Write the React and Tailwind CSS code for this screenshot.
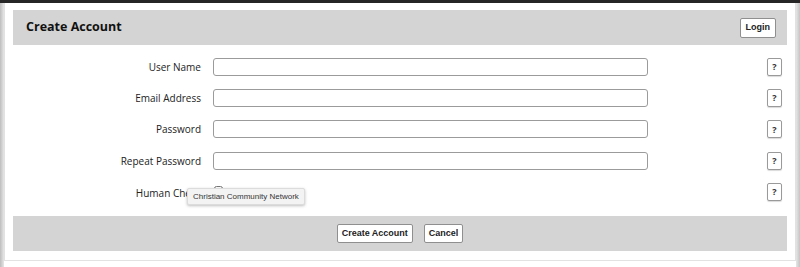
export default function App() {
  const rows = [
    { label: "User Name", type: "text" },
    { label: "Email Address", type: "text" },
    { label: "Password", type: "password" },
    { label: "Repeat Password", type: "password" },
  ];

  const helpBtn = (
    <button className="w-[15px] h-[18px] border border-[#9a9a9a] rounded-[2px] bg-white text-[9px] font-bold text-[#333] leading-none flex items-center justify-center shadow-[0_1px_1px_rgba(0,0,0,0.15)]">
      ?
    </button>
  );

  return (
    <div className="w-[800px] h-[267px] bg-white flex flex-col overflow-hidden" style={{ fontFamily: '"Open Sans", "Liberation Sans", sans-serif' }}>
      <div className="h-[3px] bg-[#262626] shrink-0"></div>
      <div className="flex flex-1">
        <div className="w-[4px] bg-gradient-to-r from-[#bdbdbd] to-[#e6e6e6]"></div>
        <div className="flex-1 flex flex-col">
          <div className="border border-[#e2e2e2] border-t-0 pt-[7px] px-[8px] pb-[9px]">
            <div className="h-[35px] bg-[#d4d4d4] flex items-center justify-between pl-[13px] pr-[11px]">
              <h1 className="text-[12.5px] font-bold text-[#111]">Create Account</h1>
              <button className="h-[20px] px-[5px] bg-white border border-[#8f8f8f] rounded-[2px] text-[9px] font-bold text-[#222] leading-none" style={{ fontFamily: '"Liberation Sans", Arial, sans-serif' }}>
                Login
              </button>
            </div>

            <div className="pt-[6px] pb-[8.5px]">
              {rows.map((r) => (
                <div key={r.label} className="h-[31.3px] flex items-center">
                  <label className="w-[188px] text-right text-[10px] text-[#222] mt-[1px]">{r.label}</label>
                  <input type={r.type} className="ml-[12px] w-[435px] h-[18px] border border-[#9b9b9b] rounded-[3px] bg-white" />
                  <div className="flex-1 flex justify-end pr-[5px]">{helpBtn}</div>
                </div>
              ))}
              <div className="h-[31.3px] flex items-center relative">
                <label className="w-[188px] text-right text-[10px] text-[#222] mt-[4px]">Human Check</label>
                <input type="checkbox" className="ml-[13px] w-[9px] h-[9px] mb-[3px]" />
                <div className="flex-1 flex justify-end pr-[5px]">{helpBtn}</div>
                <div className="absolute left-[174px] top-[12px] h-[17px] px-[5px] flex items-center bg-[#f3f3f3] border border-[#dcdcdc] rounded-[2px] shadow-[0_1px_3px_rgba(0,0,0,0.25)] text-[8px] text-[#333]" style={{ fontFamily: '"Liberation Sans", Arial, sans-serif' }}>
                  Christian Community Network
                </div>
              </div>
            </div>

            <div className="h-[35px] bg-[#d4d4d4] flex items-center justify-center gap-[11px]" style={{ fontFamily: '"Liberation Sans", Arial, sans-serif' }}>
              <button className="h-[19px] px-[4px] bg-white border border-[#8f8f8f] rounded-[2px] text-[9px] font-bold text-[#222] leading-none">
                Create Account
              </button>
              <button className="h-[19px] px-[4px] bg-white border border-[#8f8f8f] rounded-[2px] text-[9px] font-bold text-[#222] leading-none">
                Cancel
              </button>
            </div>
          </div>
        </div>
        <div className="w-[4px] bg-gradient-to-r from-[#e6e6e6] to-[#c4c4c4]"></div>
      </div>
    </div>
  );
}
